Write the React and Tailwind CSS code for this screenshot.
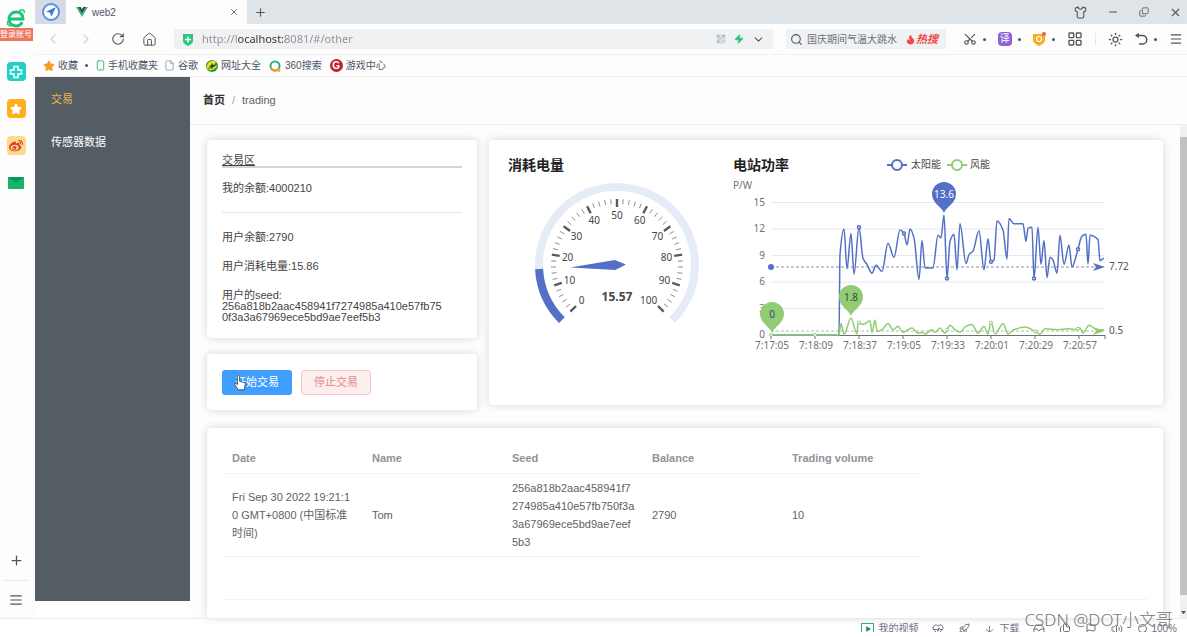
import {
  ChevronLeft, ChevronRight, ChevronDown, RotateCw, House, Search, Scissors, LayoutGrid, Sun, Menu,
  Shirt, Minus, Copy, X, Plus, Star, Zap, Flame, Navigation, Smartphone, File, HeartPulse,
  Rocket, ArrowDown, Inbox, Files, Flag, Volume2, QrCode, Play, AlignJustify,
} from 'lucide-react'
import { FaWeibo, FaStar } from 'react-icons/fa'

const SEED = '256a818b2aac458941f7274985a410e57fb750f3a3a67969ece5bd9ae7eef5b3'

const COLUMNS = ['Date', 'Name', 'Seed', 'Balance', 'Trading volume']

const TRADES = [
  {
    date: 'Fri Sep 30 2022 19:21:10 GMT+0800 (中国标准时间)',
    name: 'Tom',
    seed: SEED,
    balance: 2790,
    volume: 10,
  },
]

// [offset along the time axis, power]
const SOLAR = [
  [0, 0], [68, 0], [69, 9.1], [73, 12], [76, 7.5], [80, 11.5], [83, 6.9], [88, 12.2], [92, 8.7], [96, 8],
  [101, 7], [105, 7.9], [111, 7.2], [117, 10.4], [123, 8.8], [129, 11.9], [133, 11.5], [136, 10.2],
  [139, 12], [143, 11], [148, 6.3], [151, 10.7], [154, 7.6], [162, 7.6], [167, 11.3], [170, 11],
  [173, 13.6], [176, 6.4], [179, 10.6], [183, 11.4], [186, 7.4], [189, 12.6], [195, 8.1], [198, 9.1],
  [202, 9.5], [208, 11.8], [213, 7.4], [217, 10.9], [220, 8.3], [223, 8.5], [226, 12.9], [232, 11.9],
  [236, 8.6], [238, 13.2], [243, 12.6], [252, 12.6], [255, 10.6], [257, 12.1], [261, 12.2], [263, 6.4],
  [267, 12.2], [270, 8], [273, 10.7], [276, 6.5], [279, 8.8], [282, 8.5], [286, 7], [289, 11.3],
  [293, 8], [298, 10.2], [301, 7.7], [306, 9.3], [311, 11.2], [315, 11.4], [317, 8], [319, 11.3],
  [327, 10.8], [329, 8.4], [333, 8.7],
]

const WIND = [
  [0, 0], [68, 0], [70, 1.3], [73, 0.1], [80, 1.9], [86, 0.1], [87, 1.4], [92, 1.2], [99, 1.6], [101, 0.3],
  [104, 1.7], [106, 0.4], [111, 0.6], [117, 1.3], [122, 0.6], [127, 1], [132, 0.3], [137, 0.6],
  [141, 0.8], [147, 0.2], [151, 0.3], [154, 0.1], [161, 0.6], [164, 0.3], [169, 0.8], [174, 0.2],
  [179, 1.1], [184, 0.6], [189, 0.3], [195, 1], [201, 1.2], [207, 0.2], [213, 1], [217, 0.1],
  [220, 1.5], [224, 0.1], [232, 1.3], [237, 0.1], [243, 0.6], [254, 0.9], [264, 0.4], [269, 0.1],
  [274, 0.7], [287, 0.6], [297, 0.7], [306, 0.6], [309, 0.8], [312, 0.2], [318, 1.1], [326, 0.6], [333, 0.6],
]

const TIMES = ['7:17:05', '7:18:09', '7:18:37', '7:19:05', '7:19:33', '7:20:01', '7:20:29', '7:20:57']

const px = (t) => 38 + t
const py = (v) => 180 - v * 8.83

// smooth curve, flat at every local peak so it never overshoots
function smoothPath(data) {
  const p = data.map(([t, v]) => [px(t), py(v)])
  const slope = p.map((_, i) => {
    if (i === 0 || i === p.length - 1) return 0
    const a = (p[i][1] - p[i - 1][1]) / (p[i][0] - p[i - 1][0])
    const b = (p[i + 1][1] - p[i][1]) / (p[i + 1][0] - p[i][0])
    return a * b <= 0 ? 0 : (2 * a * b) / (a + b)
  })
  let d = `M${p[0][0]},${p[0][1]}`
  for (let i = 1; i < p.length; i++) {
    const h = (p[i][0] - p[i - 1][0]) / 3
    d += `C${p[i - 1][0] + h},${p[i - 1][1] + slope[i - 1] * h} ${p[i][0] - h},${p[i][1] - slope[i] * h} ${p[i][0]},${p[i][1]}`
  }
  return d
}

function Pin({ x, y, fill, color, label }) {
  return (
    <g>
      <path
        d={`M${x},${y + 19} C${x - 2},${y + 13} ${x - 12},${y + 9} ${x - 12},${y} A12,12 0 0 1 ${x + 12},${y} C${x + 12},${y + 9} ${x + 2},${y + 13} ${x},${y + 19}Z`}
        fill={fill}
      />
      <text x={x} y={y + 4} textAnchor="middle" fontSize="10" fill={color}>{label}</text>
    </g>
  )
}

function PowerChart() {
  return (
    <svg viewBox="0 0 430 240" className="w-full" fontFamily='"Noto Sans", "Noto Sans CJK SC", sans-serif'>
      <text x="0" y="15" fontSize="14" fontWeight="700" fill="#222">电站功率</text>
      <text x="0" y="34" fontSize="10" fill="#6e7079">P/W</text>

      <g fontSize="10" fill="#444">
        <path d="M154,10H174" stroke="#5470c6" strokeWidth="2" />
        <circle cx="164" cy="10" r="5" fill="#fff" stroke="#5470c6" strokeWidth="2" />
        <text x="178" y="13">太阳能</text>
        <path d="M214,10H234" stroke="#91cc75" strokeWidth="2" />
        <circle cx="224" cy="10" r="5" fill="#fff" stroke="#91cc75" strokeWidth="2" />
        <text x="237" y="13">风能</text>
      </g>

      {[0, 3, 6, 9, 12, 15].map(v => (
        <g key={v}>
          {v > 0 && <path d={`M38,${py(v)}H372`} stroke="#e6e9f1" />}
          <text x="32" y={py(v) + 3} textAnchor="end" fontSize="10" fill="#6e7079">{v}</text>
        </g>
      ))}

      <path d="M38,180.5H372" stroke="#6e7079" />
      {TIMES.map((time, i) => (
        <g key={time}>
          <path d={`M${38 + i * 44},180v4`} stroke="#6e7079" />
          <text x={39 + i * 44} y="194" textAnchor="middle" fontSize="10" fill="#6e7079">{time}</text>
        </g>
      ))}
      <path d="M372,180v4" stroke="#6e7079" />

      <path d="M38,112H364" stroke="#8a90a8" strokeDasharray="3 2" />
      <path d="M38,176H364" stroke="#a5c99a" strokeDasharray="3 2" />

      <path d={smoothPath(SOLAR)} fill="none" stroke="#5470c6" strokeWidth="1.5" />
      <path d={smoothPath(WIND)} fill="none" stroke="#91cc75" strokeWidth="1.5" />

      {[[88, 12.2], [133, 11.5], [176, 6.4], [220, 8.3], [263, 6.4], [307, 9.7]].map(([t, v]) => (
        <circle key={t} cx={px(t)} cy={py(v)} r="1.5" fill="#fff" stroke="#5470c6" strokeWidth="1.5" />
      ))}
      {[[0, 0], [44, 0], [88, 1.4], [176, 0.6], [220, 1.4], [264, 0.4], [307, 0.7]].map(([t, v]) => (
        <circle key={t} cx={px(t)} cy={py(v)} r="1.5" fill="#fff" stroke="#91cc75" />
      ))}

      <circle cx="38" cy="112" r="3" fill="#5470c6" />
      <path d="M372,112l-12,-4 3,4 -3,4Z" fill="#5470c6" />
      <text x="376" y="115" fontSize="10" fill="#555">7.72</text>
      <path d="M372,176l-12,-4 3,4 -3,4Z" fill="#91cc75" />
      <text x="376" y="179" fontSize="10" fill="#555">0.5</text>

      <Pin x={211} y={39} fill="#5470c6" color="#fff" label="13.6" />
      <Pin x={118} y={142} fill="#91cc75" color="#33502a" label="1.8" />
      <Pin x={39} y={159} fill="#91cc75" color="#2c4a86" label="0" />
    </svg>
  )
}

const CX = 109
const CY = 110

function polar(value, r) {
  const a = ((225 - value * 2.7) * Math.PI) / 180
  return [CX + r * Math.cos(a), CY - r * Math.sin(a)]
}

function arc(from, to, r) {
  const large = (to - from) * 2.7 > 180 ? 1 : 0
  return `M${polar(from, r)} A${r},${r} 0 ${large} 1 ${polar(to, r)}`
}

function Gauge({ value }) {
  const ticks = Array.from({ length: 51 }, (_, i) => i * 2)
  return (
    <svg viewBox="0 0 225 240" className="w-full" fontFamily='"Noto Sans", "Noto Sans CJK SC", sans-serif'>
      <text x="0" y="15" fontSize="14" fontWeight="700" fill="#222">消耗电量</text>
      <path d={arc(0, 100, 78)} fill="none" stroke="#e6ebf8" strokeWidth="8" />
      <path d={arc(0, value, 78)} fill="none" stroke="#5470c6" strokeWidth="8" />
      {ticks.map(t => (
        <path
          key={t}
          d={`M${polar(t, 66)}L${polar(t, t % 10 ? 61 : 58)}`}
          stroke={t % 10 ? '#8b8e96' : '#555a64'}
          strokeWidth={t % 10 ? 1 : 2.4}
        />
      ))}
      {ticks.filter(t => t % 10 === 0).map(t => {
        const [x, y] = polar(t, t === 100 ? 49 : 50)
        return <text key={t} x={x - (t === 100 ? 3 : 0)} y={y + 4} textAnchor="middle" fontSize="10" fill="#464646">{t}</text>
      })}
      <path
        d={`M${CX - 47},${CY} L${CX - 2},${CY - 5} L${CX + 9},${CY} L${CX - 2},${CY + 5}Z`}
        fill="#5470c6"
        transform={`rotate(${value * 2.7 - 45} ${CX} ${CY})`}
      />
      <text x={CX} y="146" textAnchor="middle" fontSize="12" fontWeight="700" fill="#464646">{value}</text>
    </svg>
  )
}

function Card({ className, children }) {
  return (
    <section className={`rounded-sm bg-white shadow-[0_0_8px_rgba(0,0,0,0.16)] ${className}`}>
      {children}
    </section>
  )
}

function Dot() {
  return <span className="block size-[3px] rounded-full bg-gray-600" />
}

function IconButton({ label, children }) {
  return (
    <button type="button" aria-label={label} className="flex items-center justify-center text-[#555]">
      {children}
    </button>
  )
}

function BrowserRail() {
  return (
    <aside className="flex w-[35px] shrink-0 flex-col items-center bg-[#fdfdfd] pr-[3px]">
      <svg viewBox="0 0 20 20" className="mt-2 size-5 shrink-0" fill="none" stroke="#1fc27a">
        <path d="M3,11H17C17,6 14,4 10,4C6,4 3,7 3,11C3,15 6,18 10,18C13,18 15,17 16,14" strokeWidth="3" />
        <path d="M2,13C0,18 5,19 9,16M12,4C16,1 19,1 18,5" strokeWidth="1.5" />
      </svg>
      <button type="button" className="h-[13px] w-[33px] shrink-0 bg-[#ee7560] text-[8px] leading-[13px] text-white">登录账号</button>
      <div className="mt-[21px] flex flex-col items-center gap-[18px]">
        <button type="button" aria-label="健康" className="flex size-[19px] items-center justify-center rounded bg-[#20d0c4] text-white">
          <svg viewBox="0 0 14 14" className="size-[14px]" fill="none" stroke="currentColor" strokeWidth="1.5">
            <path d="M5,1.5H9V5H12.500V9H9V12.500H5V9H1.500V5H5Z" />
          </svg>
        </button>
        <button type="button" aria-label="收藏" className="flex size-[19px] items-center justify-center rounded bg-[#ffb01f] text-white">
          <FaStar size={12} />
        </button>
        <button type="button" aria-label="微博" className="flex size-[19px] items-center justify-center rounded bg-[#ffd98a] text-[#d5402b]">
          <FaWeibo size={14} />
        </button>
        <button type="button" aria-label="邮箱" className="flex size-[19px] items-center justify-center">
          <svg viewBox="0 0 16 12" className="w-4">
            <rect width="16" height="12" rx="1" fill="#12b76a" />
            <path d="M0,0H16L8,6Z" fill="#0a9a58" />
          </svg>
        </button>
      </div>
      <div className="mt-auto mb-[11px] flex w-6 flex-col items-center">
        <IconButton label="添加"><Plus size={15} /></IconButton>
        <hr className="my-3 w-full border-gray-200" />
        <IconButton label="列表"><AlignJustify size={14} /></IconButton>
      </div>
    </aside>
  )
}

function TabBar() {
  return (
    <div className="flex h-6 items-center bg-[#dfe4e8]">
      <div className="flex h-full w-[31px] items-center justify-center bg-[#d5dae6]">
        <span className="flex size-[18px] items-center justify-center rounded-full border-2 border-[#5b8fe0] bg-white text-[#2f7be0]">
          <Navigation size={10} fill="currentColor" />
        </span>
      </div>
      <div className="flex h-full w-[181px] items-center bg-[#fdfdfd] pr-2 pl-[10px]">
        <svg viewBox="0 0 12 10" className="mr-1 w-3">
          <path d="M0,0H3L6,5L9,0H12L6,10Z" fill="#41b883" />
          <path d="M2.200,0H4.700L6,2.200L7.300,0H9.800L6,6.400Z" fill="#35495e" />
        </svg>
        <span className="flex-1 text-[10px] text-gray-600">web2</span>
        <IconButton label="关闭标签"><X size={10} /></IconButton>
      </div>
      <div className="ml-[7px] flex"><IconButton label="新标签"><Plus size={13} /></IconButton></div>
      <div className="ml-auto flex items-center gap-5 pr-[5px]">
        <IconButton label="皮肤"><Shirt size={13} /></IconButton>
        <IconButton label="最小化"><Minus size={12} /></IconButton>
        <IconButton label="还原"><Copy size={10} className="-scale-x-100 rotate-180" /></IconButton>
        <IconButton label="关闭"><X size={13} /></IconButton>
      </div>
    </div>
  )
}

function AddressBar() {
  return (
    <div className="flex h-[30px] items-center bg-[#fdfdfd]">
      <div className="flex w-[139px] items-center gap-[17px] pl-[10px]">
        <button type="button" aria-label="后退" className="text-gray-300"><ChevronLeft size={16} /></button>
        <button type="button" aria-label="前进" className="text-gray-300"><ChevronRight size={16} /></button>
        <IconButton label="刷新"><RotateCw size={14} /></IconButton>
        <IconButton label="主页"><House size={15} strokeWidth={1.6} /></IconButton>
      </div>
      <div className="flex h-5 flex-1 items-center gap-2 bg-[#f0f1f3] px-2">
        <svg viewBox="0 0 12 13" className="w-3 shrink-0">
          <path d="M1,1H11V8C11,10 8,12 6,13C4,12 1,10 1,8Z" fill="#2fc47c" />
          <path d="M6,3.500V9.500M3,6.500H9" stroke="#fff" strokeWidth="1.500" />
        </svg>
        <input
          type="text"
          aria-label="地址"
          defaultValue="http://localhost:8081/#/other"
          className="min-w-0 flex-1 bg-[linear-gradient(90deg,#8d9093_36px,#333_36px,#333_83px,#8d9093_83px)] bg-clip-text font-['Noto_Sans'] text-[11px] text-transparent outline-none"
        />
        <QrCode size={10} className="text-gray-400" />
        <Zap size={10} className="text-[#1fc27a]" fill="currentColor" />
        <IconButton label="更多"><ChevronDown size={13} /></IconButton>
      </div>
      <div className="ml-[13px] flex h-5 w-[160px] items-center gap-1 bg-[#f0f1f3] px-1">
        <Search size={13} className="shrink-0 text-gray-600" />
        <input
          type="text"
          aria-label="搜索"
          placeholder="国庆期间气温大跳水"
          className="w-[94px] text-[10px] outline-none placeholder:text-gray-500"
        />
        <span className="flex items-center text-[11px] font-bold whitespace-nowrap text-[#f04848] italic">
          <Flame size={11} fill="currentColor" />热搜
        </span>
      </div>
      <div className="flex w-[241px] items-center justify-between pr-1 pl-[17px]">
        <div className="flex items-center gap-[6px]"><IconButton label="截图"><Scissors size={14} className="-rotate-90" /></IconButton><Dot /></div>
        <div className="flex items-center gap-[6px]">
          <button type="button" className="size-[14px] rounded-sm bg-[#8f62d8] text-[10px] leading-[14px] text-white">译</button>
          <Dot />
        </div>
        <div className="flex items-center gap-[6px]">
          <IconButton label="安全">
            <svg viewBox="0 0 14 14" className="size-[14px]">
              <path d="M1,2H13V8C13,11 9,13 7,14C5,13 1,11 1,8Z" fill="#f9ae22" />
              <circle cx="7" cy="7" r="2.500" fill="none" stroke="#fff" strokeWidth="1.200" />
              <circle cx="12" cy="2" r="2" fill="#e8603c" />
            </svg>
          </IconButton>
          <Dot />
        </div>
        <IconButton label="应用"><LayoutGrid size={16} /></IconButton>
        <span className="h-3 w-px bg-gray-200" />
        <IconButton label="亮度"><Sun size={15} /></IconButton>
        <div className="flex items-center gap-[6px]">
          <IconButton label="撤销">
            <svg viewBox="0 0 14 14" className="size-[14px]" fill="none" stroke="currentColor" strokeWidth="1.500">
              <path d="M2,3.500H8.500A4.200,4.200 0 0 1 8.500,12H5" />
              <path d="M5,1L1,3.500L5,6Z" fill="currentColor" stroke="none" />
            </svg>
          </IconButton>
          <Dot />
        </div>
        <IconButton label="菜单"><Menu size={14} /></IconButton>
      </div>
    </div>
  )
}

function BookmarkBar() {
  return (
    <nav className="flex h-[23px] items-center border-y border-[#f0f0f0] bg-[#fdfdfd] pl-2 text-[10px] text-gray-600">
      <a href="#fav" className="flex items-center gap-[3px]">
        <Star size={12} className="text-[#f59a23]" fill="currentColor" />收藏
      </a>
      <span className="mx-[7px]"><Dot /></span>
      <a href="#mobile" className="flex items-center gap-[2px]">
        <Smartphone size={11} className="text-[#3fae7a]" />手机收藏夹
      </a>
      <a href="#google" className="ml-[6px] flex items-center gap-[3px]">
        <File size={11} className="text-gray-400" />谷歌
      </a>
      <a href="#sites" className="ml-2 flex items-center gap-[3px]">
        <svg viewBox="0 0 12 12" className="size-3">
          <circle cx="6" cy="6" r="6" fill="#2f8f3a" />
          <path d="M1,9C0,5 3,0 9,1C12,4 5,5 1,9Z" fill="#f5e12b" />
          <path d="M2,10C6,11 11,9 11,5C8,7 4,7 2,10Z" fill="#c9d62c" />
          <path d="M6,3.500V8.500M3.500,6H8.500" stroke="#222" strokeWidth="1.200" />
        </svg>
        网址大全
      </a>
      <a href="#so" className="ml-2 flex items-center gap-1">
        <svg viewBox="0 0 12 12" className="size-3" fill="none">
          <circle cx="6" cy="6" r="4.500" stroke="#2bb673" strokeWidth="2" />
          <path d="M2,8A4.500,4.500 0 0 0 9,9.500L11,11.500" stroke="#f59a23" strokeWidth="2" />
        </svg>
        360搜索
      </a>
      <a href="#games" className="ml-2 flex items-center gap-[3px]">
        <span className="flex size-[13px] items-center justify-center rounded-full bg-[#c3202f] text-[10px] font-bold text-white">G</span>
        游戏中心
      </a>
    </nav>
  )
}

function TradePanel() {
  return (
    <Card className="px-[15px] py-[15px] text-[11px] leading-[11px] text-[#444]">
      <h2 className="border-b-2 border-[#d4d4d4] underline">交易区</h2>
      <p className="mt-[15px]">我的余额:4000210</p>
      <hr className="mt-[18px] border-[#e2e4e8]" />
      <p className="mt-[19px]">用户余额:2790</p>
      <p className="mt-[18px]">用户消耗电量:15.86</p>
      <p className="mt-[18px] w-[220px] break-all">用户的seed:<br />{SEED}</p>
    </Card>
  )
}

function TradeTable() {
  return (
    <table className="w-[700px] table-fixed text-left text-[11px] leading-[18px] text-[#606266]">
      <thead>
        <tr className="border-b border-[#f0f2f5] text-[#909399]">
          {COLUMNS.map(c => <th key={c} className="py-[6px] pl-[10px] font-bold">{c}</th>)}
        </tr>
      </thead>
      <tbody>
        {TRADES.map(row => (
          <tr key={row.date} className="border-b border-[#f0f2f5]">
            {Object.values(row).map((cell, i) => (
              <td key={i} className="py-[5px] pr-[6px] pl-[10px] break-all">{cell}</td>
            ))}
          </tr>
        ))}
      </tbody>
    </table>
  )
}

function StatusBar() {
  return (
    <footer className="mb-[5px] flex h-[14px] items-start justify-end overflow-hidden border-t border-[#ececec] pr-[10px] text-[10px] leading-[20px] text-gray-500">
      <div className="flex h-5 items-center gap-[14px]">
        <span className="flex items-center gap-1">
          <span className="flex h-3 w-[13px] items-center justify-center border border-[#2bb673] text-[#2b8f5e]">
            <Play size={6} fill="currentColor" />
          </span>
          我的视频
        </span>
        <HeartPulse size={12} />
        <Rocket size={12} />
        <span className="flex items-center gap-1"><ArrowDown size={11} />下载</span>
        <Inbox size={12} />
        <Files size={12} />
        <Flag size={12} />
        <Volume2 size={12} />
        <span className="flex items-center gap-[2px]"><Search size={12} />100%</span>
      </div>
    </footer>
  )
}

export default function App() {
  return (
    <div className="relative flex min-h-screen flex-col bg-white font-['Liberation_Sans','Noto_Sans_CJK_SC',sans-serif]">
      <div className="flex flex-1">
        <BrowserRail />
        <div className="flex min-w-0 flex-1 flex-col">
          <TabBar />
          <AddressBar />
          <BookmarkBar />
          <div className="flex flex-1">
            <aside className="mb-[17px] w-[155px] shrink-0 bg-[#545c64]">
              <nav className="flex flex-col px-4 text-[11px]">
                <a href="#/other" className="leading-[44px] text-[#e6b94a]">交易</a>
                <a href="#/sensor" className="leading-[43px] text-white">传感器数据</a>
              </nav>
            </aside>
            <main className="flex min-w-0 flex-1 flex-col bg-[#fdfdfd]">
              <nav className="flex h-12 items-center gap-[7px] border-b border-[#ececec] pl-[13px] text-[11px]">
                <a href="#/" className="font-bold text-[#303133]">首页</a>
                <span className="text-[#a0a4ac]">/</span>
                <span className="text-[#606266]">trading</span>
              </nav>
              <div className="flex flex-1">
                <div className="flex min-w-0 flex-1 flex-col px-[17px] pt-[15px]">
                  <div className="flex gap-3">
                    <div className="flex w-[270px] shrink-0 flex-col gap-4">
                      <TradePanel />
                      <Card className="flex gap-[9px] px-[15px] pt-4 pb-[15px]">
                        <button type="button" className="relative h-[25px] w-[70px] rounded-[3px] bg-[#409eff] text-[11px] text-white">
                          开始交易
                          <svg viewBox="0 0 14 18" className="absolute top-[5px] left-3 h-4 w-3">
                            <path
                              d="M4,1.500C4,0 6.500,0 6.500,1.500V7L12,8.500C13,9 13,10 13,11L12,17H5L1,11C0,9.500 2,8.500 4,11Z"
                              fill="#fff"
                              stroke="#444"
                            />
                          </svg>
                        </button>
                        <button type="button" className="h-[25px] w-[70px] rounded-[3px] border border-[#f5c8ca] bg-[#fdeeee] text-[11px] text-[#e8888c]">
                          停止交易
                        </button>
                      </Card>
                    </div>
                    <Card className="mb-[5px] grid flex-1 grid-cols-[225px_430px] overflow-hidden pt-[15px] pl-[19px]">
                      <Gauge value={15.57} />
                      <PowerChart />
                    </Card>
                  </div>
                  <Card className="mt-[18px] flex-1 px-[15px] pt-[15px]">
                    <TradeTable />
                    <hr className="mt-[42px] border-[#f3f4f6]" />
                  </Card>
                </div>
                <div className="flex w-[7px] shrink-0 flex-col items-center bg-[#f1f1f1] pt-3 pb-1">
                  <div className="mb-4 w-full flex-1 bg-[#c1c1c1]" />
                  <svg viewBox="0 0 6 4" className="w-[5px]"><path d="M0,0H6L3,4Z" fill="#555" /></svg>
                </div>
              </div>
            </main>
          </div>
        </div>
      </div>
      <StatusBar />
      <p className="absolute right-[14px] bottom-[5px] font-['Noto_Sans','Noto_Sans_CJK_SC',sans-serif] text-[17px] font-light text-[#777]">
        CSDN @DOT小文哥
      </p>
    </div>
  )
}
